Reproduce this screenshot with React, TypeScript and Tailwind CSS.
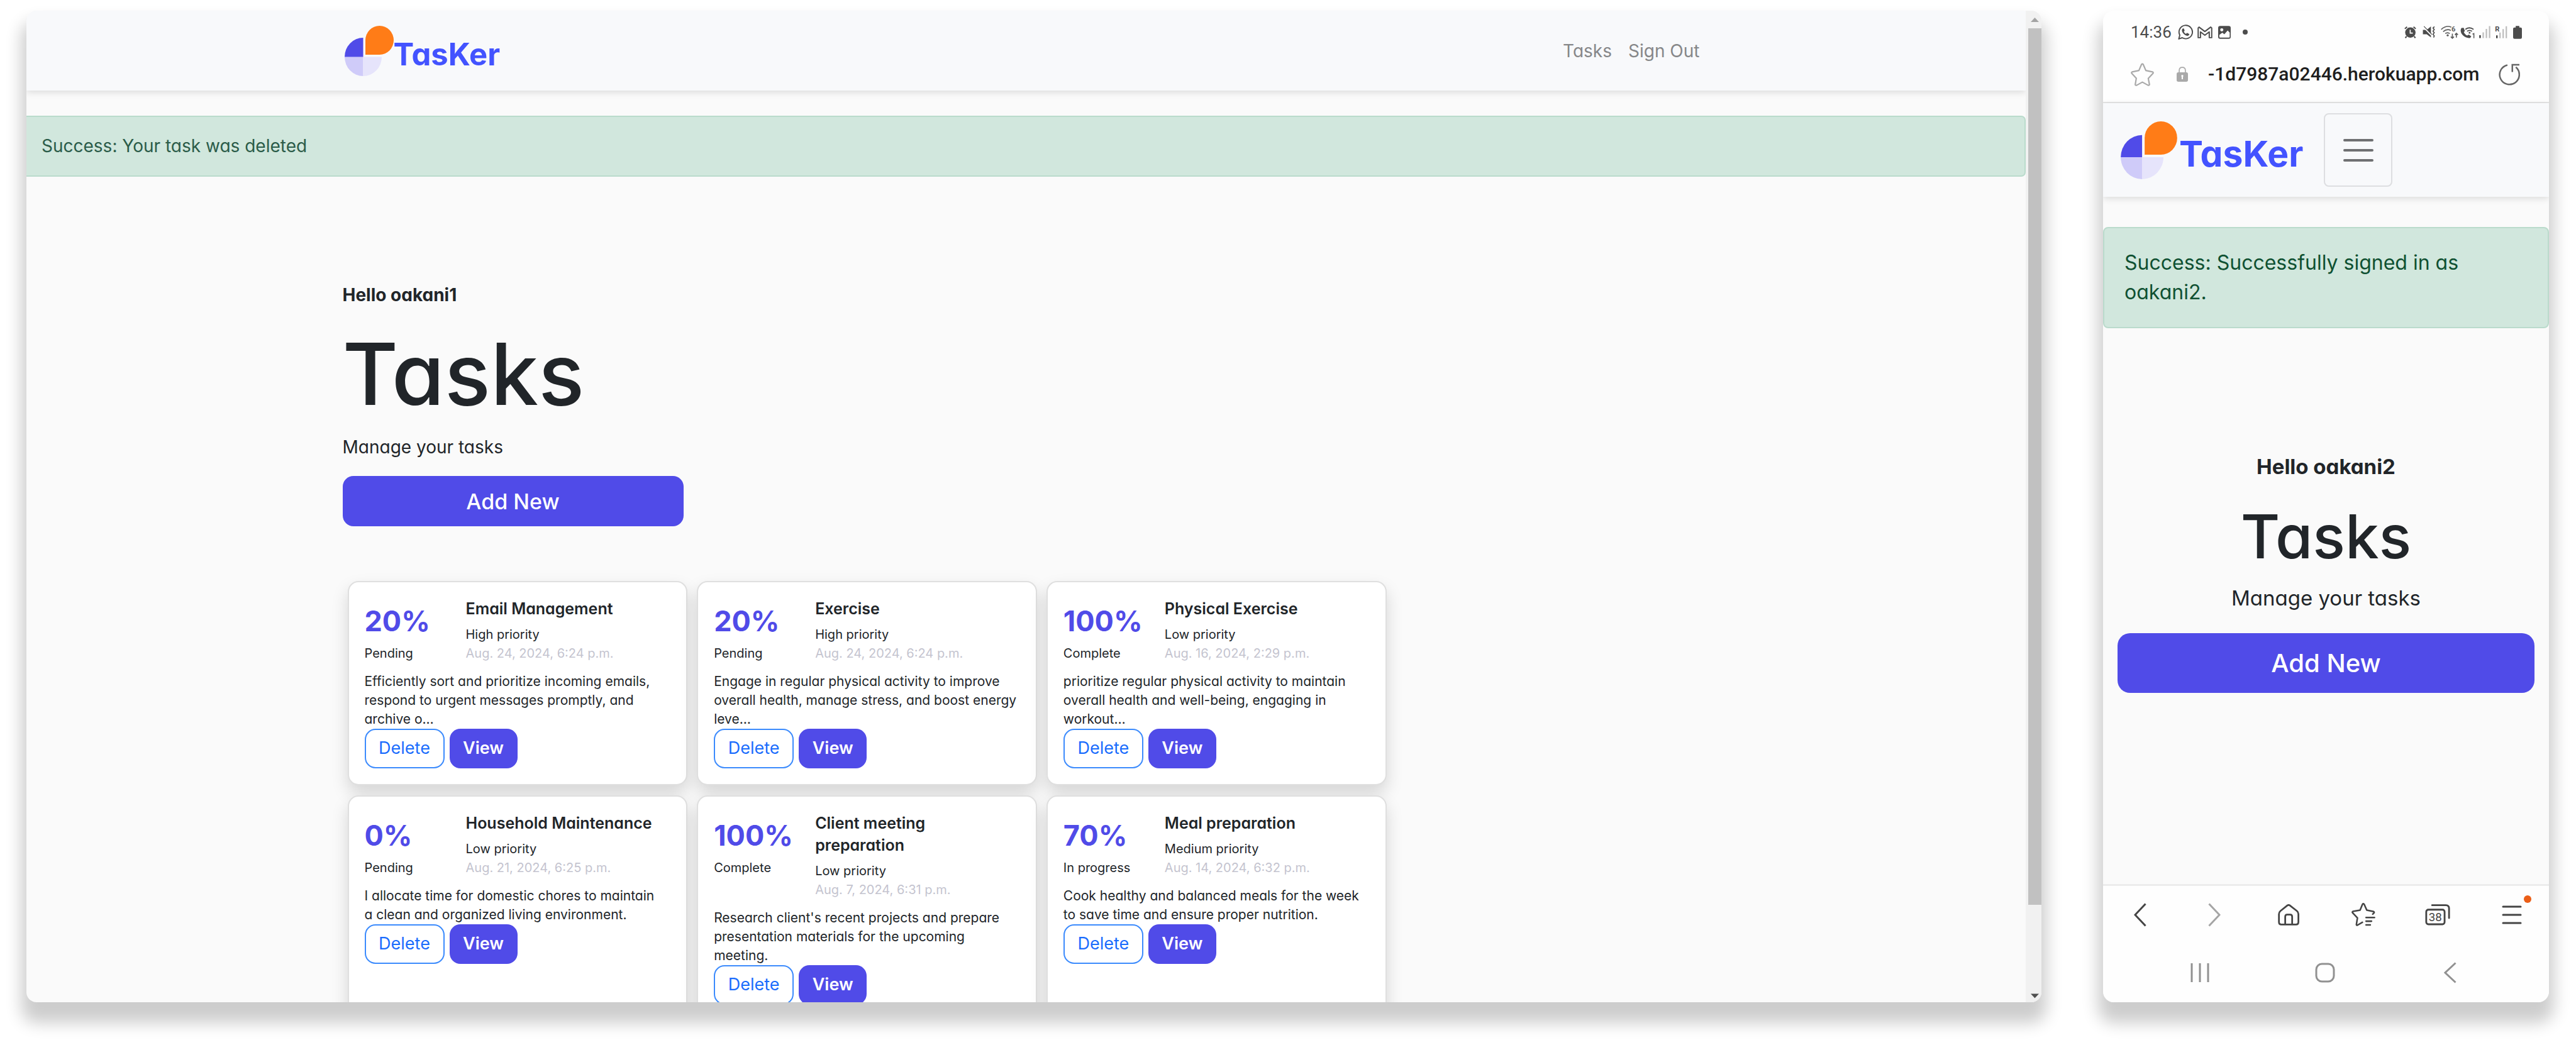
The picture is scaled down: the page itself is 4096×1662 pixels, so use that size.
import type { ReactNode } from "react";

type Task = {
  percent: string;
  status: string;
  title: string[];
  priority: string;
  date: string;
  body: string[];
};

const tasks: Task[] = [
  {
    percent: "20%",
    status: "Pending",
    title: ["Email Management"],
    priority: "High priority",
    date: "Aug. 24, 2024, 6:24 p.m.",
    body: ["Efficiently sort and prioritize incoming emails,", "respond to urgent messages promptly, and", "archive o…"],
  },
  {
    percent: "20%",
    status: "Pending",
    title: ["Exercise"],
    priority: "High priority",
    date: "Aug. 24, 2024, 6:24 p.m.",
    body: ["Engage in regular physical activity to improve", "overall health, manage stress, and boost energy", "leve…"],
  },
  {
    percent: "100%",
    status: "Complete",
    title: ["Physical Exercise"],
    priority: "Low priority",
    date: "Aug. 16, 2024, 2:29 p.m.",
    body: ["prioritize regular physical activity to maintain", "overall health and well-being, engaging in", "workout…"],
  },
  {
    percent: "0%",
    status: "Pending",
    title: ["Household Maintenance"],
    priority: "Low priority",
    date: "Aug. 21, 2024, 6:25 p.m.",
    body: ["I allocate time for domestic chores to maintain", "a clean and organized living environment."],
  },
  {
    percent: "100%",
    status: "Complete",
    title: ["Client meeting", "preparation"],
    priority: "Low priority",
    date: "Aug. 7, 2024, 6:31 p.m.",
    body: ["Research client's recent projects and prepare", "presentation materials for the upcoming", "meeting."],
  },
  {
    percent: "70%",
    status: "In progress",
    title: ["Meal preparation"],
    priority: "Medium priority",
    date: "Aug. 14, 2024, 6:32 p.m.",
    body: ["Cook healthy and balanced meals for the week", "to save time and ensure proper nutrition."],
  },
];

function LogoMark({ className }: { className: string }) {
  return (
    <svg viewBox="0 0 78 80" className={className} aria-hidden="true">
      <path d="M0 49.5A29.5 30.5 0 0 0 29.5 80V49.5Z" fill="#cfcbf9" />
      <path d="M29.5 80A29.5 30.5 0 0 0 59 49.5H29.5Z" fill="#e6e4fb" />
      <path d="M0 49.5A29.5 30.5 0 0 1 29.5 19V49.5Z" fill="#504be8" />
      <path d="M33 46V23A22.5 23 0 1 1 55.500 46Z" fill="#ff7c17" />
    </svg>
  );
}

function Lines({ lines }: { lines: string[] }) {
  return (
    <>
      {lines.map((line) => (
        <span key={line} className="block whitespace-nowrap">
          {line}
        </span>
      ))}
    </>
  );
}

function TaskCard({ task }: { task: Task }) {
  return (
    <article className="rounded-[17px] border-2 border-[#dfdfdf] bg-white px-[25px] py-[25px] shadow-[0_13px_27px_rgba(0,0,0,0.15)]">
      <div className="flex">
        <div className="w-[161px] shrink-0 pt-[7px]">
          <p className="text-[45px] leading-[60px] font-bold text-[#504be8]">{task.percent}</p>
          <p className="mt-1.5 text-[20px] leading-[30px]">{task.status}</p>
        </div>
        <div>
          <h2 className="text-[25px] leading-[35px] font-semibold">
            <Lines lines={task.title} />
          </h2>
          <p className="mt-2 text-[20px] leading-[30px]">{task.priority}</p>
          <p className="text-[20px] leading-[30px] text-[#c4c4cf]">{task.date}</p>
        </div>
      </div>
      <p className="mt-[15px] text-[21px] leading-[30px]">
        <Lines lines={task.body} />
      </p>
      <div className="flex gap-2">
        <button type="button" className="h-[63px] w-[127px] rounded-[17px] border-2 border-[#3c8bfd] text-[27px] text-[#1a6cfd]">
          Delete
        </button>
        <button type="button" className="h-[63px] w-[108px] rounded-[17px] bg-[#504be8] text-[27px] font-semibold text-white">
          View
        </button>
      </div>
    </article>
  );
}

function Desktop() {
  return (
    <section className="flex min-w-0 flex-1 overflow-hidden rounded-[16px] bg-[#fafafa] shadow-[0_25px_26px_8px_rgba(0,0,0,0.2)]">
      <div className="flex min-w-0 flex-1 flex-col">
        <header className="shrink-0 bg-[#f8f9fb] shadow-[0_3px_10px_rgba(0,0,0,0.12)]">
          <div className="mx-auto flex h-[127px] max-w-[2174px] items-center justify-between pr-4 pl-[3px]">
            <a href="#home" className="flex items-end">
              <LogoMark className="h-20 w-[78px]" />
              <span className="mb-1 text-[49px] leading-[60px] font-bold text-[#4353ff]">TasKer</span>
            </a>
            <nav className="flex gap-[26px] text-[28px] leading-10 text-[#868789]">
              <a href="#tasks">Tasks</a>
              <a href="#signout">Sign Out</a>
            </nav>
          </div>
        </header>
        <div role="alert" className="mt-10 shrink-0 rounded-r-[7px] border-2 border-l-0 border-[#badbcc] bg-[#d1e7dd] py-[27px] pl-6 text-[28px] leading-[39px] text-[#2b5c49]">
          Success: Your task was deleted
        </div>
        <main className="mx-auto min-h-0 w-full max-w-[2174px] flex-1 pt-[168px]">
          <p className="text-[28px] leading-10 font-bold">Hello oakani1</p>
          <h1 className="mt-[26px] text-[136px] leading-[160px] font-medium">Tasks</h1>
          <p className="mt-4 text-[28px] leading-10">Manage your tasks</p>
          <button type="button" className="mt-[26px] block h-[80px] w-[542px] rounded-[17px] bg-[#504be8] text-[34px] font-medium text-white">
            Add New
          </button>
          <div className="mt-[87px] ml-2 grid w-[1652px] grid-cols-3 gap-x-[15px] gap-y-4">
            {tasks.map((task) => (
              <TaskCard key={task.title[0]} task={task} />
            ))}
          </div>
        </main>
      </div>
      <div className="flex w-[25px] shrink-0 flex-col items-end bg-[#f1f1f1]">
        <svg viewBox="0 0 21 28" className="h-7 w-[21px] shrink-0" aria-hidden="true">
          <path d="M4 18h13l-6.500-7z" fill="#a3a3a3" />
        </svg>
        <div className="h-[1394px] w-[21px] bg-[#c1c1c1]" />
        <svg viewBox="0 0 21 28" className="mt-auto h-7 w-[21px] shrink-0" aria-hidden="true">
          <path d="M4 14.500h13l-6.500 7z" fill="#505050" />
        </svg>
      </div>
    </section>
  );
}

function StatusIcons() {
  return (
    <div className="flex items-center" aria-hidden="true">
      <svg viewBox="37 57 69 68" className="h-[19px] w-[19px]" fill="none" stroke="#4c4c4c">
        <circle cx="72" cy="92" r="30" fill="#4c4c4c" stroke="none" />
        <path d="M40 70l13-11M103 70L90 59" strokeWidth="7" />
        <path d="M50 114l-7 9M94 114l7 9" strokeWidth="8" />
        <path d="M71 76v19h15" stroke="#fff" strokeWidth="6" />
      </svg>
      <svg viewBox="143 56 72 70" className="ml-2.5 h-5 w-5" fill="none" stroke="#4c4c4c">
        <path d="M145 78h22l24-19v63l-24-18h-22z" fill="#4c4c4c" stroke="none" />
        <path d="M146 60l47 48" stroke="#fff" strokeWidth="7" />
        <path d="M151 58l46 47" stroke="#4c4c4c" strokeWidth="4" />
        <path d="M211 60l-8 8 7 9-7 9 7 9-7 9 7 9-4 9" strokeWidth="6" />
      </svg>
      <svg viewBox="248 54 100 76" className="ml-[9px] h-[21px] w-7 overflow-visible" fill="none" stroke="#5c5c5c">
        <path d="M250 75q28-26 58-13" strokeWidth="6" />
        <path d="M261 88q22-19 44-7" strokeWidth="6" />
        <path d="M273 99q13-10 26 0" strokeWidth="6" />
        <circle cx="287" cy="109" r="6" fill="#5c5c5c" stroke="none" />
        <path d="M314 99v26M305 117l9 9 9-9M337 122V97M329 106l8-9 9 9" strokeWidth="6" />
        <text x="309" y="86" fontSize="40" fontWeight="700" fontFamily="Roboto, sans-serif" fill="#5c5c5c" stroke="none">6</text>
      </svg>
      <svg viewBox="360 56 86 69" className="ml-[3px] h-[19px] w-6" fill="none" stroke="#4c4c4c">
        <path d="M366 65c-9 14-3 32 9 43s28 18 42 14l6-9-15-10-8 6c-9-3-17-11-20-20l6-7-7-18z" fill="#4c4c4c" stroke="none" />
        <path d="M389 73q22-18 47 0" strokeWidth="7" />
        <path d="M399 84q14-10 28 0" strokeWidth="6" />
        <circle cx="413" cy="93" r="5" fill="#4c4c4c" stroke="none" />
        <path d="M430 101l8-4v27" strokeWidth="5" />
      </svg>
      <svg viewBox="467 56 64 70" className="ml-1.5 h-5 w-[18px]">
        <path d="M468 109h8v16h-8z" fill="#333" />
        <path d="M486 93h8v32h-8zM504 73h8v52h-8zM522 57h8v68h-8z" fill="#bdbdbd" />
      </svg>
      <svg viewBox="557 54 71 72" className="ml-[7px] h-5 w-5 overflow-visible">
        <path d="M564 109h8v16h-8z" fill="#333" />
        <path d="M582 93h8v32h-8zM600 73h8v52h-8zM618 57h8v68h-8z" fill="#bdbdbd" />
        <text x="557" y="86" fontSize="40" fontWeight="700" fontFamily="Roboto, sans-serif" fill="#4c4c4c">R</text>
      </svg>
      <svg viewBox="660 54 51 75" className="ml-[9px] h-[21px] w-3.5">
        <path d="M675 54h21v9h7q8 0 8 8v50q0 8-8 8h-35q-8 0-8-8V71q0-8 8-8h7z" fill="#4c4c4c" />
      </svg>
    </div>
  );
}

function NavButton({ label, children }: { label: string; children: ReactNode }) {
  return (
    <button type="button" aria-label={label} className="flex items-center justify-center">
      {children}
    </button>
  );
}

function Phone() {
  return (
    <section className="flex w-[709px] shrink-0 flex-col overflow-hidden rounded-[17px] bg-[#fafafa] shadow-[0_25px_26px_8px_rgba(0,0,0,0.2)]">
      <div className="flex h-[68px] shrink-0 items-center justify-between bg-[#fefefe] pr-[43px] pl-[44px] font-['Roboto',sans-serif]">
        <div className="flex items-center text-[26px] leading-8 text-[#4c4c4c]">
          <span>14:36</span>
          <svg viewBox="303 48 85 87" className="ml-2.5 h-6 w-6" fill="none" stroke="#4c4c4c" aria-hidden="true">
            <path d="M307 131l6-22a38.500 38.500 0 1 1 14 15z" strokeWidth="7" strokeLinejoin="round" />
            <path d="M331 71c-5 3-7 9-5 16 4 12 16 23 29 26 7 1 12-4 13-10l-13-7-7 6c-6-3-10-8-12-13l5-6-5-12z" fill="#4c4c4c" stroke="none" />
          </svg>
          <svg viewBox="413 57 85 68" className="ml-[7px] h-[19px] w-6" fill="none" stroke="#4c4c4c" aria-hidden="true">
            <path d="M417 121V66l5-5 33 25 33-25 6 5v55h-14V88l-25 19-25-19v33z" strokeWidth="7" strokeLinejoin="round" />
          </svg>
          <svg viewBox="530 54 73 75" className="ml-[9px] h-[21px] w-5" aria-hidden="true">
            <rect x="530" y="54" width="73" height="75" rx="12" fill="#4c4c4c" />
            <circle cx="551" cy="77" r="9" fill="#fefefe" />
            <path d="M537 106l17-13 12 9 19-21 12 11v26q0 4-4 4h-52q-4 0-4-4z" fill="#fefefe" />
          </svg>
          <span className="ml-[19px] h-2 w-2 rounded-full bg-[#4c4c4c]" />
        </div>
        <StatusIcons />
      </div>
      <div className="flex h-[79px] shrink-0 items-center border-b-2 border-[#e4e4e4] bg-[#fefefe] pr-[46px] pb-[11px] pl-[44px] font-['Roboto',sans-serif]">
        <button type="button" aria-label="Bookmark">
          <svg viewBox="44 262 134 132" className="h-[37px] w-[37px]" fill="none" stroke="#a9a9a9" strokeWidth="8" strokeLinejoin="round" aria-hidden="true">
            <path d="M106 270q5-6 10 0l15 35 39 8q6 4 2 9l-27 29 7 35q-2 6-8 4l-33-18-33 18q-7 2-8-4l6-36-26-28q-4-5 2-9l39-8z" />
          </svg>
        </button>
        <svg viewBox="305 285 66 88" className="ml-9 h-6 w-[18px]" aria-hidden="true">
          <path d="M320 325v-18q0-18 18-18t18 18v18" fill="none" stroke="#a9a9a9" strokeWidth="6" />
          <rect x="305" y="318" width="66" height="55" rx="10" fill="#a9a9a9" />
          <path d="M334 337h8v21h-8z" fill="#fefefe" />
          <circle cx="338" cy="339" r="6" fill="#fefefe" />
        </svg>
        <input
          aria-label="Address"
          readOnly
          value="-1d7987a02446.herokuapp.com"
          className="ml-[32px] h-10 w-0 min-w-0 flex-1 bg-transparent text-[30px] leading-10 font-medium text-[#1f1f1f] outline-none"
        />
        <button type="button" aria-label="Reload">
          <svg viewBox="578 266 122 124" className="h-[35px] w-[34px]" fill="none" stroke="#666" strokeWidth="9" strokeLinecap="square" aria-hidden="true">
            <path d="M628 274a56 56 0 1 0 48 12" strokeLinecap="butt" />
            <path d="M656 309v-37h36" />
          </svg>
        </button>
      </div>
      <header className="flex h-[149px] shrink-0 items-center bg-[#f8f9fb] pl-[28px] shadow-[0_3px_10px_rgba(0,0,0,0.12)]">
        <a href="#home" className="flex items-end gap-[3px]">
          <LogoMark className="h-[92px] w-[90px]" />
          <span className="mb-1 text-[57px] leading-[72px] font-bold text-[#4353ff]">TasKer</span>
        </a>
        <button type="button" aria-label="Menu" className="mr-[249px] ml-auto flex h-[117px] w-[109px] items-center justify-center rounded-[8px] border-2 border-[#dddee1]">
          <svg viewBox="0 0 48 38" className="h-[38px] w-12" fill="none" stroke="#6f7072" strokeWidth="4" strokeLinecap="round" aria-hidden="true">
            <path d="M2 3h44M2 19h44M2 35h44" />
          </svg>
        </button>
      </header>
      <div role="alert" className="mt-12 shrink-0 rounded-[8px] border-2 border-[#badbcc] bg-[#d1e7dd] pt-[31px] pr-6 pb-8 pl-8 text-[32px] leading-[47px] text-[#0f5132]">
        <Lines lines={["Success: Successfully signed in as", "oakani2."]} />
      </div>
      <main className="flex min-h-0 flex-1 flex-col items-center px-[23px] pt-[197px]">
        <p className="text-[33px] leading-[47px] font-bold">Hello oakani2</p>
        <h1 className="mt-[27px] text-[96px] leading-[120px] font-medium">Tasks</h1>
        <p className="mt-[15px] text-[33px] leading-[47px]">Manage your tasks</p>
        <button type="button" className="mt-8 h-[95px] w-full rounded-[20px] bg-[#504be8] text-[40px] font-medium text-white">
          Add New
        </button>
      </main>
      <nav aria-label="Browser" className="grid h-[94px] shrink-0 grid-cols-6 border-t-[3px] border-[#ececec] bg-[#fefefe]">
        <NavButton label="Back">
          <svg viewBox="0 0 20 38" className="h-[38px] w-5" fill="none" stroke="#444" strokeWidth="3" aria-hidden="true">
            <path d="M18.500 1.500L2 19l16.500 17.500" />
          </svg>
        </NavButton>
        <NavButton label="Forward">
          <svg viewBox="0 0 20 38" className="h-[38px] w-5" fill="none" stroke="#a5a5a5" strokeWidth="3" aria-hidden="true">
            <path d="M1.500 1.500L18 19 1.500 36.500" />
          </svg>
        </NavButton>
        <NavButton label="Home">
          <svg viewBox="72 72 123 123" className="h-[34px] w-[34px]" fill="none" stroke="#444" strokeWidth="10" strokeLinejoin="round" aria-hidden="true">
            <path d="M127 79q7-4 13 0l41 32q9 7 9 18v45q0 15-14 15H92q-14 0-14-15v-45q0-11 9-18z" />
            <path d="M114 188v-44q0-12 11-12h18q11 0 11 12v44" />
          </svg>
        </NavButton>
        <NavButton label="Bookmarks">
          <svg viewBox="488 68 136 132" className="h-[37px] w-[38px]" fill="none" stroke="#444" strokeWidth="9" strokeLinejoin="round" strokeLinecap="round" aria-hidden="true">
            <path d="M609 132l7-7q3-5-2-8l-39-8-15-34q-5-5-9 0l-14 34-41 7q-5 3-2 8l28 29-6 38q1 6 7 3l27-16" />
            <path d="M571 151h48M571 172h31M571 193h24" />
          </svg>
        </NavButton>
        <NavButton label="Tabs">
          <svg viewBox="912 76 140 120" className="h-[34px] w-10" fill="none" stroke="#444" strokeWidth="10" strokeLinecap="round" aria-hidden="true">
            <rect x="918" y="107" width="103" height="82" rx="12" />
            <path d="M951 82h77q18 0 18 18v54" />
            <text x="969" y="171" textAnchor="middle" fontSize="66" fontFamily="Roboto, sans-serif" fill="#444" stroke="none">38</text>
          </svg>
        </NavButton>
        <NavButton label="More">
          <span className="relative">
            <svg viewBox="0 0 32 30" className="h-[30px] w-8" fill="none" stroke="#444" strokeWidth="3" strokeLinecap="round" aria-hidden="true">
              <path d="M2 2h28M2 15h28M2 28h28" />
            </svg>
            <span className="absolute -top-4 -right-[15px] h-3 w-3 rounded-full bg-[#eb5e17]" />
          </span>
        </NavButton>
      </nav>
      <nav aria-label="System" className="grid h-[94px] shrink-0 grid-cols-3 bg-[#fefefe] pr-[58px] pl-[54px]">
        <NavButton label="Recents">
          <svg viewBox="0 0 30 32" className="h-8 w-[30px]" stroke="#919191" strokeWidth="3" aria-hidden="true">
            <path d="M2 1v30M15 1v30M28 1v30" />
          </svg>
        </NavButton>
        <NavButton label="System home">
          <svg viewBox="0 0 32 32" className="h-8 w-8" fill="none" stroke="#919191" strokeWidth="3" aria-hidden="true">
            <rect x="2" y="2" width="28" height="28" rx="9" />
          </svg>
        </NavButton>
        <NavButton label="System back">
          <svg viewBox="0 0 20 34" className="h-[34px] w-5" fill="none" stroke="#919191" strokeWidth="3" aria-hidden="true">
            <path d="M18.500 1.500L2 17l16.500 15.500" />
          </svg>
        </NavButton>
      </nav>
    </section>
  );
}

export default function App() {
  return (
    <div className="flex h-screen gap-[98px] overflow-hidden bg-white pt-[17px] pr-[43px] pb-[68px] pl-[42px] font-['Inter','Open_Sans',sans-serif] text-[#212529] [font-feature-settings:'cv11']">
      <Desktop />
      <Phone />
    </div>
  );
}
